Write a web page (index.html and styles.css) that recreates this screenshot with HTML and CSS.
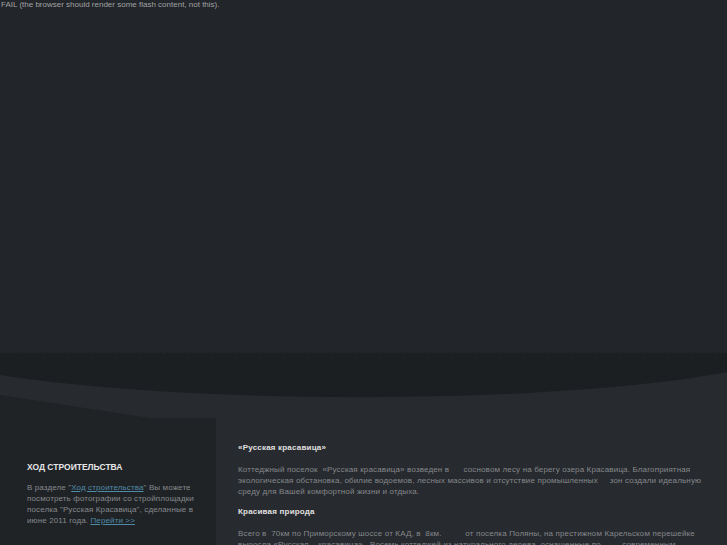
FILE: index.html
```html
<!DOCTYPE html>
<html lang="ru">
<head>
<meta charset="utf-8">
<title>Русская красавица</title>
<link rel="stylesheet" href="styles.css">
</head>
<body>
<div class="flash">FAIL (the browser should render some flash content, not this).</div>
<svg class="wave" width="727" height="66" viewBox="0 0 727 66" aria-hidden="true">
  <rect x="0" y="0" width="727" height="66" fill="#272a2e"/>
  <path d="M0 0 H727 V20 C560 52 200 54 0 23 Z" fill="#1c1f22"/>
  <line x1="0" y1="0.5" x2="727" y2="0.5" stroke="#2a2e32" stroke-dasharray="1 2"/>
  <path d="M0 43 L150 66 L0 66 Z" fill="#202326"/>
</svg>
<div class="content">
  <aside class="sidebar">
    <h3 class="side-title">ХОД СТРОИТЕЛЬСТВА</h3>
    <p class="side-text">В разделе "<a href="#">Ход строительства</a>" Вы можете<br>посмотреть фотографии со стройплощадки<br>поселка "Русская Красавица", сделанные в<br>июне 2011 года. <a href="#">Перейти &gt;&gt;</a></p>
  </aside>
  <main class="main">
    <h2 class="main-title">«Русская красавица»</h2>
    <p class="main-text">Коттеджный поселок &nbsp;«Русская красавица» возведен в &nbsp; &nbsp; &nbsp;сосновом лесу на берегу озера Красавица. Благоприятная<br>экологическая обстановка, обилие водоемов, лесных массивов и отсутствие промышленных &nbsp; &nbsp; зон создали идеальную<br>среду для Вашей комфортной жизни и отдыха.</p>
    <h2 class="main-title">Красивая природа</h2>
    <p class="main-text">Всего в &nbsp;70км по Приморскому шоссе от КАД, в &nbsp;8км. &nbsp; &nbsp; &nbsp; &nbsp; &nbsp;от поселка Поляны, на престижном Карельском перешейке<br>выросла «Русская &nbsp; &nbsp;красавица». &nbsp;Восемь коттеджей из натурального дерева, оснащенные по &nbsp; &nbsp; &nbsp; &nbsp; современным</p>
  </main>
</div>
</body>
</html>
```

FILE: styles.css
```css
html, body {
  margin: 0;
  padding: 0;
}
body {
  background: #222529;
  font-family: "Liberation Sans", Arial, sans-serif;
  color: #85888c;
  width: 727px;
  height: 545px;
  overflow: hidden;
}
.flash {
  height: 352px;
  font-size: 8px;
  line-height: 10px;
  color: #a0a2a4;
  padding-left: 1px;
}
.wave {
  display: block;
}
.content {
  display: flex;
  height: 127px;
}
.sidebar {
  width: 216px;
  flex: none;
  background: #202326;
  box-sizing: border-box;
  padding: 44px 0 0 27px;
}
.main {
  flex: 1;
  background: #272a2e;
  padding: 25px 0 0 22px;
}
.side-title {
  margin: 0 0 10px;
  font-size: 8.5px;
  line-height: 10px;
  font-weight: bold;
  color: #e6e6e6;
}
.side-text {
  margin: 0;
  font-size: 8px;
  line-height: 11px;
  letter-spacing: 0.12px;
}
a {
  color: #4f8aa6;
  text-decoration: underline;
}
.main-title {
  margin: 0 0 11px;
  font-size: 8px;
  line-height: 10px;
  font-weight: bold;
  color: #e0e0e0;
  letter-spacing: 0.2px;
}
.main-text {
  margin: 0 0 10px;
  font-size: 8px;
  line-height: 11px;
  letter-spacing: 0.15px;
  white-space: nowrap;
}
```
